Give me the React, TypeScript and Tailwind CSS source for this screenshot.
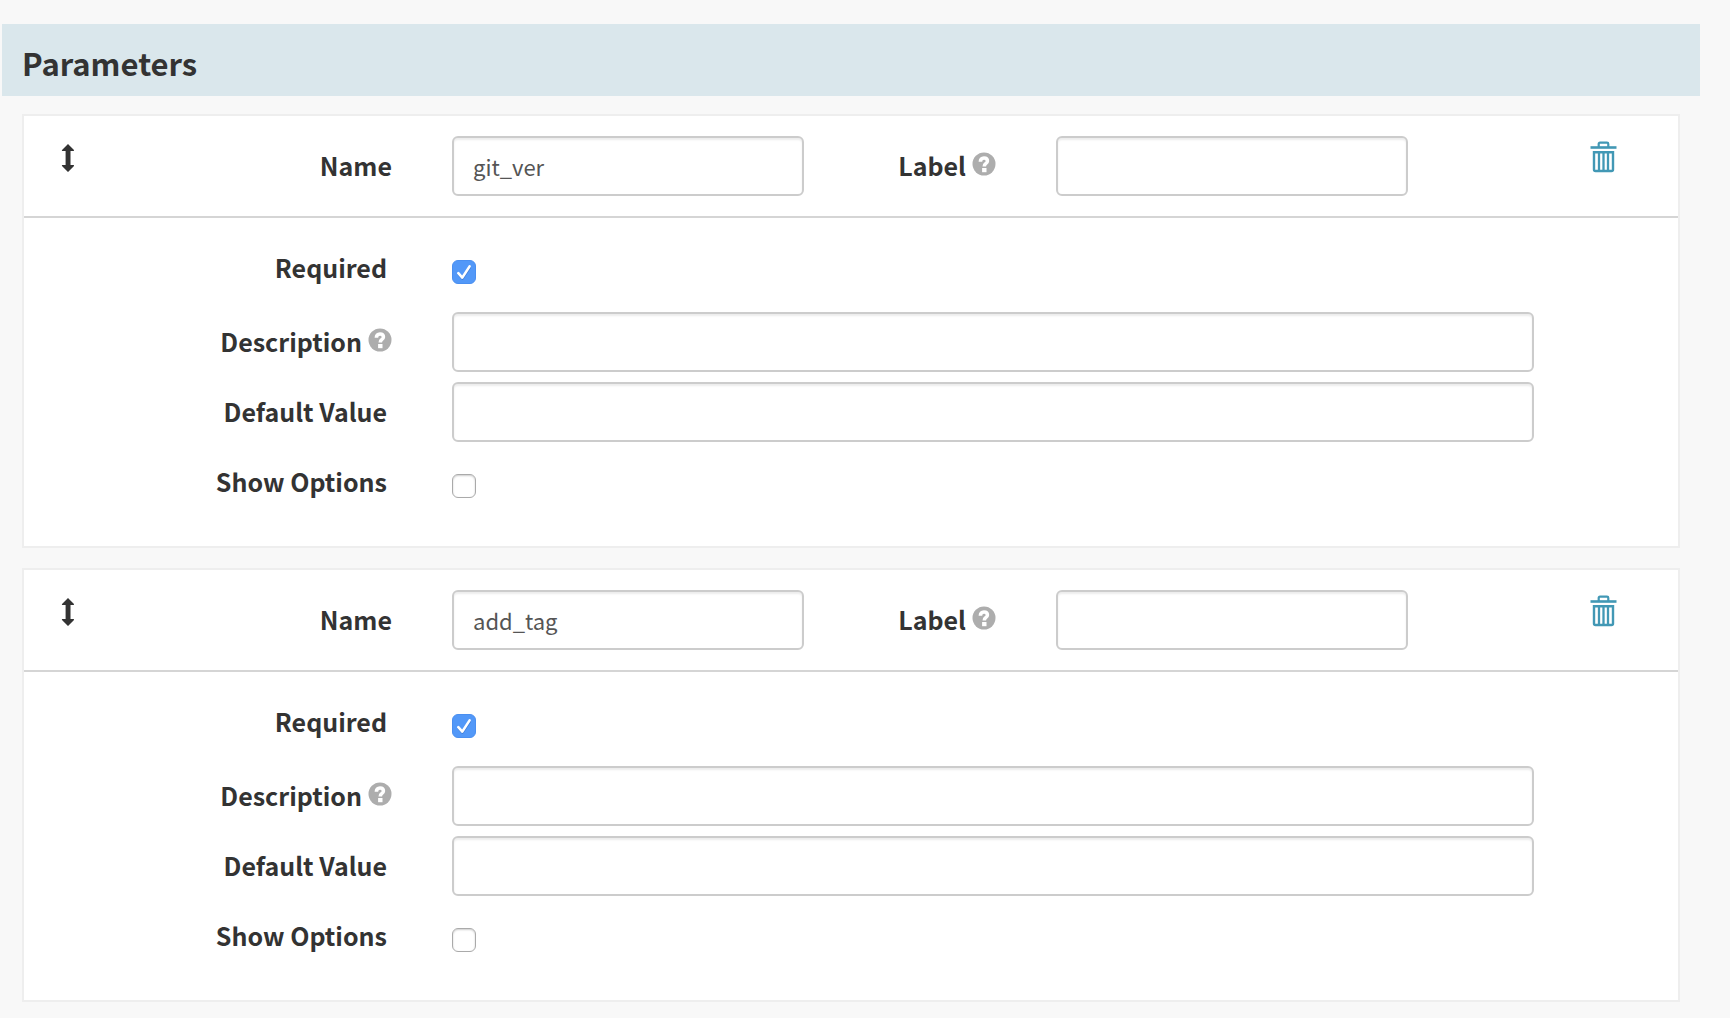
import { useState, type ReactNode } from 'react'

const TEXT_INPUT =
  'block h-[60px] w-full min-w-0 rounded-md border-2 border-[#ccc] bg-white px-[19px] text-[22px] text-[#555] shadow-[inset_0_2px_2px_rgba(0,0,0,0.075)] outline-none focus:border-[#66afe9]'

function MoveIcon() {
  return (
    <svg width="14" height="28" viewBox="0 0 14 28" fill="#333" aria-hidden="true">
      <path d="M7 0 L13 6 Q13.3 7 12.4 7 H9.5 V21 H12.4 Q13.3 21 13 22 L7 28 L1 22 Q.5 21 1.4 21 H4.6 V7 H1.4 Q.5 7 1 6 Z" />
    </svg>
  )
}

function TrashIcon() {
  return (
    <svg width="28" height="32" viewBox="0 0 28 32" fill="none" stroke="#4298b5" aria-hidden="true">
      <path d="M.5 6.5 H26.5" strokeWidth="2.6" />
      <path d="M8.7 6 V3 Q8.7 1.7 10 1.7 H17 Q18.3 1.7 18.3 3 V6" strokeWidth="2.2" />
      <path d="M4 11.2 H23 V28.5 Q23 30 21.5 30 H5.5 Q4 30 4 28.5 Z" strokeWidth="2.4" />
      <path d="M9 11 V30 M13.5 11 V30 M18 11 V30" strokeWidth="2.3" />
    </svg>
  )
}

function HelpIcon() {
  return (
    <svg className="mb-1 shrink-0" width="24" height="24" viewBox="0 0 24 24" role="img" aria-label="Help">
      <circle cx="12" cy="12" r="11.5" fill="#adadad" />
      <path d="M8.4 9.8 Q8.4 6 12 6 Q15.4 6 15.4 9 Q15.4 10.7 13.6 11.8 Q12.3 12.6 12.3 14.4" fill="none" stroke="#fff" strokeWidth="3.6" />
      <rect x="10.1" y="16" width="4.4" height="4.2" fill="#fff" />
    </svg>
  )
}

function FieldLabel({ htmlFor, help, flush, children }: { htmlFor: string; help?: boolean; flush?: boolean; children: ReactNode }) {
  return (
    <div className={`flex h-[60px] items-center justify-end gap-1.5 whitespace-nowrap ${help || flush ? 'pr-[60px]' : 'pr-[65px]'}`}>
      <label htmlFor={htmlFor} className="pb-0.5 text-[25px] leading-[58px] font-bold">
        {children}
      </label>
      {help && <HelpIcon />}
    </div>
  )
}

function Checkbox({ id, initial }: { id: string; initial: boolean }) {
  const [checked, setChecked] = useState(initial)
  return (
    <div className="grid h-[60px] content-start justify-start pt-[22px]">
      <input
        id={id}
        type="checkbox"
        checked={checked}
        onChange={(e) => setChecked(e.target.checked)}
        className="peer col-start-1 row-start-1 size-6 appearance-none rounded-md border border-[#aaa] bg-white shadow-[inset_0_1px_2px_rgba(0,0,0,0.2)] checked:border-[#4a8ff0] checked:bg-[#5298f8] checked:shadow-none"
      />
      <svg
        className="pointer-events-none invisible col-start-1 row-start-1 size-6 peer-checked:visible"
        viewBox="0 0 24 24"
        fill="none"
        strokeLinecap="round"
        strokeLinejoin="round"
        aria-hidden="true"
      >
        <path d="M6.5 14.3 L10.5 18.7 L17.8 7.5" stroke="#3f7cd6" strokeWidth="2.4" />
        <path d="M6.3 13.2 L10.3 17.6 L17.6 6.4" stroke="#fff" strokeWidth="2.6" />
      </svg>
    </div>
  )
}

function ParameterCard({ name }: { name: string }) {
  return (
    <section aria-label={name} className="border-2 border-[#eee] bg-white">
      <div className="grid grid-cols-[428fr_352fr_252fr_352fr_270fr] border-b-2 border-[#d5d5d5] py-5">
        <div className="flex items-start justify-between pl-[37px]">
          <button type="button" aria-label="Reorder parameter" className="mt-2 cursor-move">
            <MoveIcon />
          </button>
          <FieldLabel htmlFor={`${name}-name`} flush>
            Name
          </FieldLabel>
        </div>
        <input id={`${name}-name`} type="text" defaultValue={name} className={TEXT_INPUT} />
        <FieldLabel htmlFor={`${name}-label`} help>
          Label
        </FieldLabel>
        <input id={`${name}-label`} type="text" className={TEXT_INPUT} />
        <div className="flex items-start justify-end pr-[60px]">
          <button type="button" aria-label="Delete parameter" className="mt-[5px] cursor-pointer">
            <TrashIcon />
          </button>
        </div>
      </div>
      <div className="grid grid-cols-[428fr_1082fr_144fr] gap-y-[10px] pt-5 pb-[34px]">
        <div className="col-span-3 mb-1 grid grid-cols-subgrid">
          <FieldLabel htmlFor={`${name}-required`}>Required</FieldLabel>
          <Checkbox id={`${name}-required`} initial={true} />
        </div>
        <div className="col-span-3 grid grid-cols-subgrid">
          <FieldLabel htmlFor={`${name}-description`} help>
            Description
          </FieldLabel>
          <input id={`${name}-description`} type="text" className={TEXT_INPUT} />
        </div>
        <div className="col-span-3 grid grid-cols-subgrid">
          <FieldLabel htmlFor={`${name}-default`}>Default Value</FieldLabel>
          <input id={`${name}-default`} type="text" className={TEXT_INPUT} />
        </div>
        <div className="col-span-3 grid grid-cols-subgrid">
          <FieldLabel htmlFor={`${name}-options`}>Show Options</FieldLabel>
          <Checkbox id={`${name}-options`} initial={false} />
        </div>
      </div>
    </section>
  )
}

export default function App() {
  return (
    <main className="min-h-screen bg-[#f8f8f8] pt-6 pr-[30px] pb-4 pl-0.5 font-['Noto_Sans_CJK_SC','Noto_Sans',sans-serif] text-[#333]">
      <h1 className="bg-[#dae7ec] px-5 pt-1.5 text-[31px] leading-[66px] font-semibold">Parameters</h1>
      <div className="mt-[18px] flex flex-col gap-5 px-5">
        <ParameterCard name="git_ver" />
        <ParameterCard name="add_tag" />
      </div>
    </main>
  )
}
